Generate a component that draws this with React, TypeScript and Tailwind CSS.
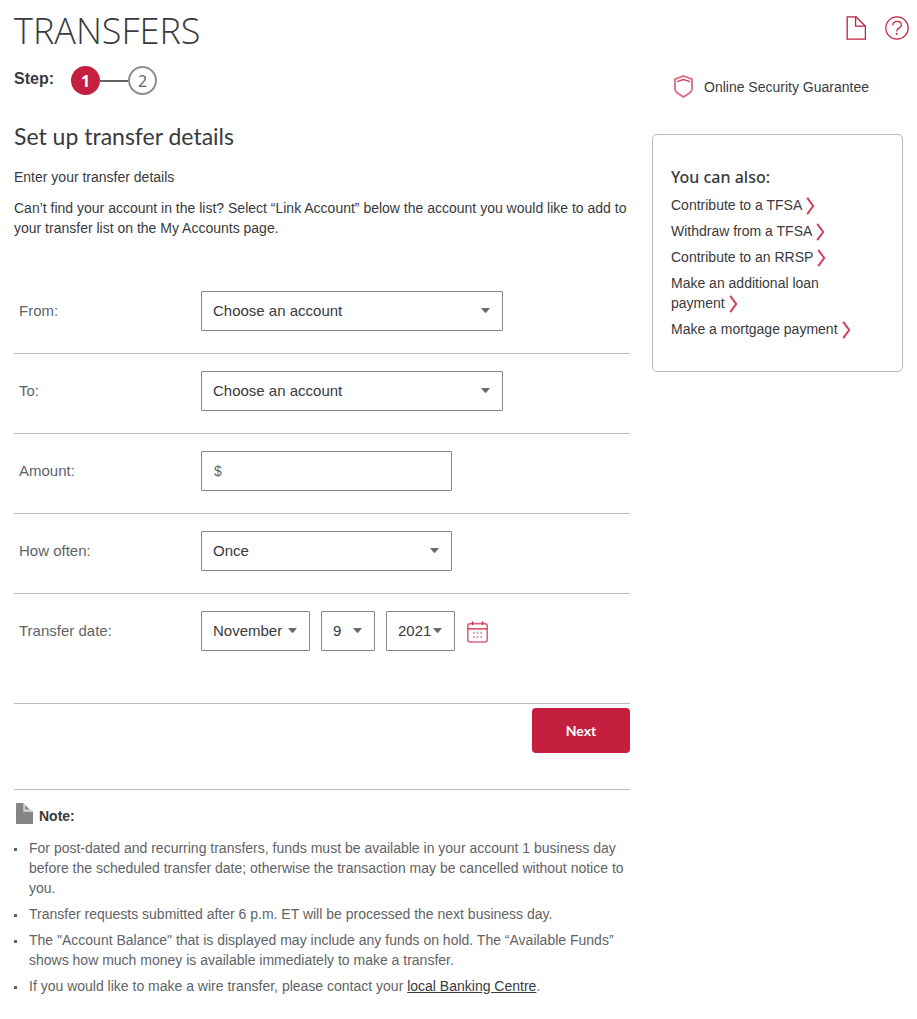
import type { ReactNode } from "react";

function Caret() {
  return (
    <svg
      className="pointer-events-none absolute right-[13px] top-1/2 -mt-[3px]"
      width="9"
      height="5"
      viewBox="0 0 9 5"
      aria-hidden="true"
    >
      <path d="M0 0h9L5.3 4.4q-.8.6-1.6 0z" fill="#6b6b6d" />
    </svg>
  );
}

type SelectProps = {
  id: string;
  label?: string;
  options: string[];
  value: string;
  className: string;
};

function Select({ id, label, options, value, className }: SelectProps) {
  return (
    <div className={`relative ${className}`}>
      <select
        id={id}
        aria-label={label}
        defaultValue={value}
        className="h-10 w-full appearance-none rounded-[1px] border border-[#858587] bg-white pl-[11px] text-[15px] leading-5 text-[#393a3d]"
      >
        {options.map((option) => (
          <option key={option}>{option}</option>
        ))}
      </select>
      <Caret />
    </div>
  );
}

function Row({
  htmlFor,
  label,
  last = false,
  children,
}: {
  htmlFor: string;
  label: string;
  last?: boolean;
  children: ReactNode;
}) {
  return (
    <div
      className={`flex items-center border-b border-[#b9b9bb] pt-[17px] ${last ? "pb-[52px]" : "pb-[22px]"}`}
    >
      <label htmlFor={htmlFor} className="w-[187px] shrink-0 pl-[5px] text-[15px] leading-5 text-[#626366]">
        {label}
      </label>
      {children}
    </div>
  );
}

function SideLink({ children }: { children: ReactNode }) {
  return (
    <li>
      <a href="#" className="text-[#393a3d]">
        {children}
        <svg
          className="-my-1 ml-1 inline-block align-middle"
          width="9"
          height="18"
          viewBox="0 0 9 18"
          fill="none"
          aria-hidden="true"
        >
          <path d="M1.2 0.8L7.2 9L1.2 17.2" stroke="#d0405d" strokeWidth="2" />
        </svg>
      </a>
    </li>
  );
}

function NoteItem({ children }: { children: ReactNode }) {
  return (
    <li className="flex gap-3">
      <span className="mt-[10px] size-[3px] shrink-0 bg-[#626366]" />
      <span>{children}</span>
    </li>
  );
}

const months = [
  "January", "February", "March", "April", "May", "June",
  "July", "August", "September", "October", "November", "December",
];
const days = Array.from({ length: 31 }, (_, i) => String(i + 1));

export default function App() {
  return (
    <div className="min-h-screen bg-white pb-6 font-['Liberation_Sans',Arial,sans-serif] text-sm leading-5 text-[#393a3d]">
      <header className="flex items-start justify-between pl-[14px] pr-2">
        <h1 className="font-['Open_Sans','Noto_Sans',sans-serif] text-[36px] font-light leading-[62px]">
          TRANSFERS
        </h1>
        <div className="flex gap-[19px] pt-4">
          <a href="#" aria-label="View page notes">
            <svg width="20" height="24" viewBox="0 0 20 24" fill="none" stroke="#c41f3e" strokeWidth="1.3" aria-hidden="true">
              <path d="M1.2 0.8H10L19.4 10.2V23.2H1.2Z" strokeLinejoin="round" />
              <path d="M9.6 0.8V10.2H19.2" />
            </svg>
          </a>
          <a href="#" aria-label="Help">
            <svg width="24" height="24" viewBox="0 0 24 24" fill="none" stroke="#c41f3e" strokeWidth="1.2" aria-hidden="true">
              <circle cx="12" cy="12" r="11.2" />
              <path d="M7.8 9.6C7.8 6.9 9.6 5.4 12.1 5.4S16.4 7 16.4 9.2C16.4 12.2 11.7 11.6 11.7 15.4" />
              <path d="M11.7 17V18.8" strokeWidth="1.5" />
            </svg>
          </a>
        </div>
      </header>

      <div className="flex items-start gap-[22px] px-[14px]">
        <main className="min-w-0 flex-1">
          <div className="flex items-start pt-1">
            <span className="mr-[17px] mt-[3px] text-base font-bold leading-5">Step:</span>
            <ol className="flex items-center font-['Noto_Sans','Open_Sans',sans-serif] text-base">
              <li className="flex size-[29px] items-center justify-center rounded-full bg-[#c41f3e] font-bold text-white">
                1
              </li>
              <li className="flex items-center">
                <span className="h-[2px] w-7 bg-[#626366]" />
                <span className="flex size-[29px] items-center justify-center rounded-full border-2 border-[#8f9092] text-[#626366]">
                  2
                </span>
              </li>
            </ol>
          </div>

          <h2 className="mt-[25px] font-[Lato,'Noto_Sans',sans-serif] text-[23px] leading-8">
            Set up transfer details
          </h2>
          <p className="mt-[15px]">Enter your transfer details</p>
          <p className="mt-[11px]">
            Can’t find your account in the list? Select “Link Account” below the account you would like to add to
            your transfer list on the My Accounts page.
          </p>

          <form className="mt-9" onSubmit={(event) => event.preventDefault()}>
            <Row htmlFor="from" label="From:">
              <Select id="from" options={["Choose an account"]} value="Choose an account" className="w-[302px]" />
            </Row>
            <Row htmlFor="to" label="To:">
              <Select id="to" options={["Choose an account"]} value="Choose an account" className="w-[302px]" />
            </Row>
            <Row htmlFor="amount" label="Amount:">
              <input
                id="amount"
                type="text"
                placeholder="$"
                className="h-10 w-[251px] rounded-[1px] border border-[#858587] bg-white px-3 text-sm leading-5 placeholder:text-[#626366]"
              />
            </Row>
            <Row htmlFor="frequency" label="How often:">
              <Select
                id="frequency"
                options={["Once", "Weekly", "Every two weeks", "Monthly"]}
                value="Once"
                className="w-[251px]"
              />
            </Row>
            <Row htmlFor="month" label="Transfer date:" last>
              <div className="flex items-center gap-[11px]">
                <Select id="month" options={months} value="November" className="w-[109px]" />
                <Select id="day" label="Day" options={days} value="9" className="w-[54px]" />
                <Select id="year" label="Year" options={["2021", "2022"]} value="2021" className="w-[69px]" />
                <button type="button" aria-label="Open calendar" className="ml-px mt-[2px]">
                  <svg className="block" width="21" height="22" viewBox="0 0 21 22" fill="none" stroke="#d96a80" aria-hidden="true">
                    <rect x="0.8" y="2.6" width="19.4" height="18.4" rx="2.4" strokeWidth="1.6" />
                    <path d="M0.7 7.9H20.3M5.5 0.5V4M15.5 0.5V4" stroke="#c41f3e" strokeWidth="1.3" />
                    <path d="M6 12H7.6M9.7 12H11.3M13.4 12H15M6 16H7.6M9.7 16H11.3M13.4 16H15" stroke="#c41f3e" strokeWidth="1.2" />
                  </svg>
                </button>
              </div>
            </Row>
            <div className="flex justify-end pt-1">
              <button
                type="submit"
                className="h-[45px] w-[98px] rounded bg-[#c41f3e] font-[Lato,'Noto_Sans',sans-serif] text-sm font-bold text-white"
              >
                Next
              </button>
            </div>
          </form>

          <section className="mt-9 border-t border-[#b9b9bb] pt-[13px]">
            <div className="flex items-start gap-[6px] pl-[2px]">
              <svg width="17" height="21" viewBox="0 0 17 21" aria-hidden="true">
                <path d="M0 0H7.6V8.4H17V21H0Z" fill="#858587" />
                <path d="M7.6 0L17 8.4H7.6Z" fill="#d3d3d4" />
                <path d="M9 2.4L13.6 6.4H9Z" fill="#858587" />
              </svg>
              <h3 className="mt-[3px] text-sm font-bold leading-5">Note:</h3>
            </div>
            <ul className="mt-3 flex flex-col gap-[6px] text-[#626366]">
              <NoteItem>
                For post-dated and recurring transfers, funds must be available in your account 1 business day before
                the scheduled transfer date; otherwise the transaction may be cancelled without notice to you.
              </NoteItem>
              <NoteItem>
                Transfer requests submitted after 6 p.m. ET will be processed the next business day.
              </NoteItem>
              <NoteItem>
                The "Account Balance" that is displayed may include any funds on hold. The “Available Funds” shows how
                much money is available immediately to make a transfer.
              </NoteItem>
              <NoteItem>
                If you would like to make a wire transfer, please contact your{" "}
                <a href="#" className="text-[#393a3d] underline">
                  local Banking Centre
                </a>
                .
              </NoteItem>
            </ul>
          </section>
        </main>

        <aside className="w-[251px] shrink-0 pt-[13px]">
          <a href="#" className="flex items-center gap-[11px] pl-[22px]">
            <svg width="19" height="23" viewBox="0 0 19 23" fill="none" stroke="#d96a80" strokeWidth="1.8" aria-hidden="true">
              <path d="M9.5 1L18 4.2V14.4Q17.6 16.2 15.6 18L9.5 22L3.4 18Q1.4 16.2 1 14.4V4.2Z" />
              <path d="M3 6.6L9.5 4.6L16 6.6" stroke="#d0405d" strokeWidth="1.4" />
            </svg>
            Online Security Guarantee
          </a>
          <section className="mt-9 rounded-[5px] border border-[#b9b9bb] pb-8 pl-[18px] pr-9 pt-[30px]">
            <h2 className="font-['Noto_Sans','Open_Sans',sans-serif] text-base font-medium leading-6">
              You can also:
            </h2>
            <ul className="mt-[6px] flex flex-col gap-[6px]">
              <SideLink>Contribute to a TFSA</SideLink>
              <SideLink>Withdraw from a TFSA</SideLink>
              <SideLink>Contribute to an RRSP</SideLink>
              <SideLink>Make an additional loan payment</SideLink>
              <SideLink>Make a mortgage payment</SideLink>
            </ul>
          </section>
        </aside>
      </div>
    </div>
  );
}
